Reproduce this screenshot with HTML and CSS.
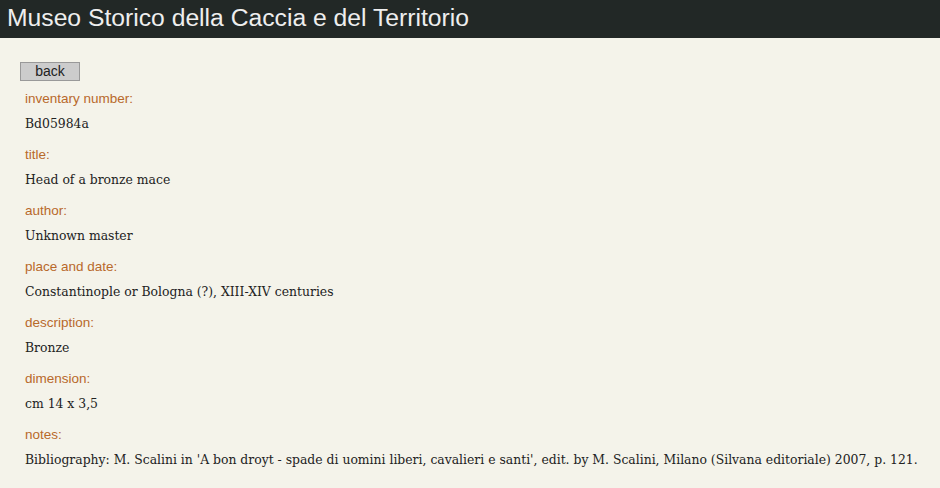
FILE: index.html
```
<!DOCTYPE html>
<html lang="en">
    <head>
        <meta charset="UTF-8" />
        <meta name="viewport" content="width=device-width, initial-scale=1.0" />
        <title>Museo Storico della Caccia e del Territorio</title>
        <link rel="stylesheet" href="styles.css">
    </head>
    <body>
        <header class="site-header">
            <h1 class="site-title">Museo Storico della Caccia e del Territorio</h1>
        </header>

        <main class="record">
            <button class="back-button" type="button">back</button>

            <div class="field">
                <div class="field-label">inventary number:</div>
                <div class="field-value">Bd05984a</div>
            </div>
            <div class="field">
                <div class="field-label">title:</div>
                <div class="field-value">Head of a bronze mace</div>
            </div>
            <div class="field">
                <div class="field-label">author:</div>
                <div class="field-value">Unknown master</div>
            </div>
            <div class="field">
                <div class="field-label">place and date:</div>
                <div class="field-value">Constantinople or Bologna (?), XIII-XIV centuries</div>
            </div>
            <div class="field">
                <div class="field-label">description:</div>
                <div class="field-value">Bronze</div>
            </div>
            <div class="field">
                <div class="field-label">dimension:</div>
                <div class="field-value">cm 14 x 3,5</div>
            </div>
            <div class="field">
                <div class="field-label">notes:</div>
                <div class="field-value">Bibliography: M. Scalini in 'A bon droyt - spade di uomini liberi, cavalieri e santi', edit. by M. Scalini, Milano (Silvana editoriale) 2007, p. 121.</div>
            </div>
        </main>
    </body>
</html>
```

FILE: styles.css
```
* {
    box-sizing: border-box;
}

body {
    margin: 0;
    background: #f4f3ea;
    font-family: "Liberation Sans", Arial, sans-serif;
}

.site-header {
    background: #222826;
    height: 38px;
    padding: 0 7px;
}

.site-title {
    margin: 0;
    font-weight: normal;
    font-size: 24.7px;
    line-height: 36px;
    color: #eeeeee;
}

.record {
    padding: 24px 20px 0 20px;
}

.back-button {
    display: block;
    width: 60px;
    height: 19px;
    padding: 0;
    margin: 0 0 8px 0;
    background: #cccccc;
    border: 1px solid #999999;
    border-radius: 0;
    font-family: "Liberation Sans", Arial, sans-serif;
    font-size: 14px;
    line-height: 17px;
    color: #222222;
}

.field {
    padding-left: 5px;
    margin-bottom: 11px;
}

.field-label {
    font-size: 13.5px;
    line-height: 20px;
    color: #b8692a;
}

.field-value {
    margin-top: 5px;
    font-family: "DejaVu Serif", Georgia, serif;
    font-size: 12.4px;
    line-height: 20px;
    color: #222222;
    white-space: nowrap;
}
```
